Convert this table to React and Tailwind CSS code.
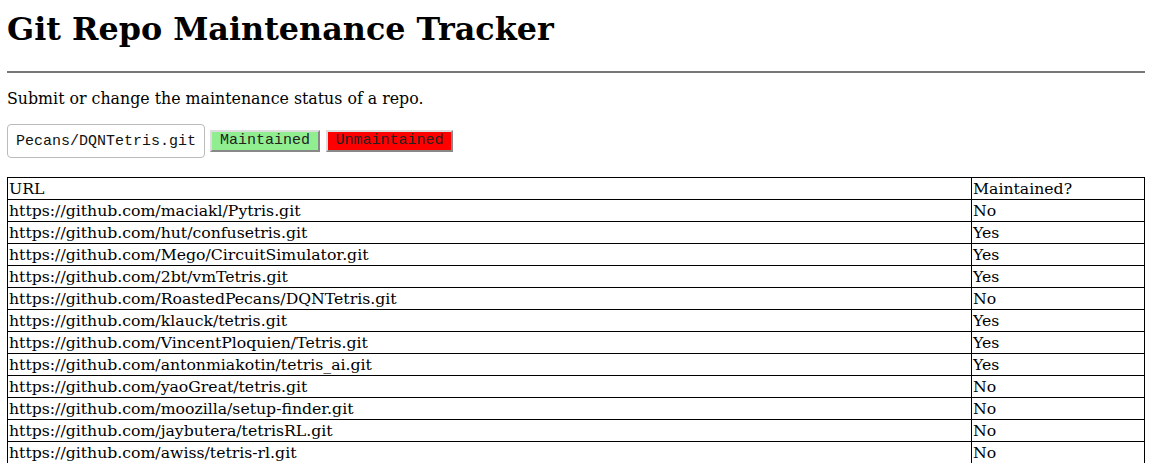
import React from 'react'

const repos = [
  ['https://github.com/maciakl/Pytris.git', 'No'],
  ['https://github.com/hut/confusetris.git', 'Yes'],
  ['https://github.com/Mego/CircuitSimulator.git', 'Yes'],
  ['https://github.com/2bt/vmTetris.git', 'Yes'],
  ['https://github.com/RoastedPecans/DQNTetris.git', 'No'],
  ['https://github.com/klauck/tetris.git', 'Yes'],
  ['https://github.com/VincentPloquien/Tetris.git', 'Yes'],
  ['https://github.com/antonmiakotin/tetris_ai.git', 'Yes'],
  ['https://github.com/yaoGreat/tetris.git', 'No'],
  ['https://github.com/moozilla/setup-finder.git', 'No'],
  ['https://github.com/jaybutera/tetrisRL.git', 'No'],
  ['https://github.com/awiss/tetris-rl.git', 'No'],
]

const cell = 'border border-black px-px py-0 text-left font-normal leading-[21px] align-middle'

export default function App() {
  return (
    <div className="h-[463px] overflow-hidden bg-white pl-[7px] pr-[4px] font-['DejaVu_Serif',serif] text-black">
      {/* Title */}
      <h1 className="pt-[10px] text-[31.8px] font-bold leading-[37px]">Git Repo Maintenance Tracker</h1>
      <hr className="mt-[24px] border-t-2 border-[#777]" />
      <p className="mt-[16px] text-[15.8px] leading-[19px]">Submit or change the maintenance status of a repo.</p>

      {/* Form */}
      <div className="mt-[16px] flex items-center font-['Liberation_Mono',monospace] text-[15px]">
        <input
          type="text"
          defaultValue="Pecans/DQNTetris.git"
          className="h-[34px] w-[198px] rounded-[4px] border border-[#bbb] bg-white px-[8px] text-[#111] outline-none"
        />
        <button className="ml-[5px] h-[22px] w-[110px] border-2 border-t-[#ddd] border-l-[#ddd] border-b-[#888] border-r-[#888] bg-[#90ee90] leading-[18px] text-[#222]">
          Maintained
        </button>
        <button className="ml-[6px] h-[22px] w-[127px] border-2 border-t-[#ddd] border-l-[#ddd] border-b-[#888] border-r-[#888] bg-[#ff0000] leading-[18px] text-[#222]">
          Unmaintained
        </button>
      </div>

      {/* Table */}
      <table className="mt-[19px] w-[1138px] table-fixed border-collapse text-[15.7px]">
        <thead>
          <tr>
            <th className={`${cell} w-[964px]`}>URL</th>
            <th className={cell}>Maintained?</th>
          </tr>
        </thead>
        <tbody>
          {repos.map(([url, status]) => (
            <tr key={url}>
              <td className={cell}>{url}</td>
              <td className={cell}>{status}</td>
            </tr>
          ))}
        </tbody>
      </table>
    </div>
  )
}
